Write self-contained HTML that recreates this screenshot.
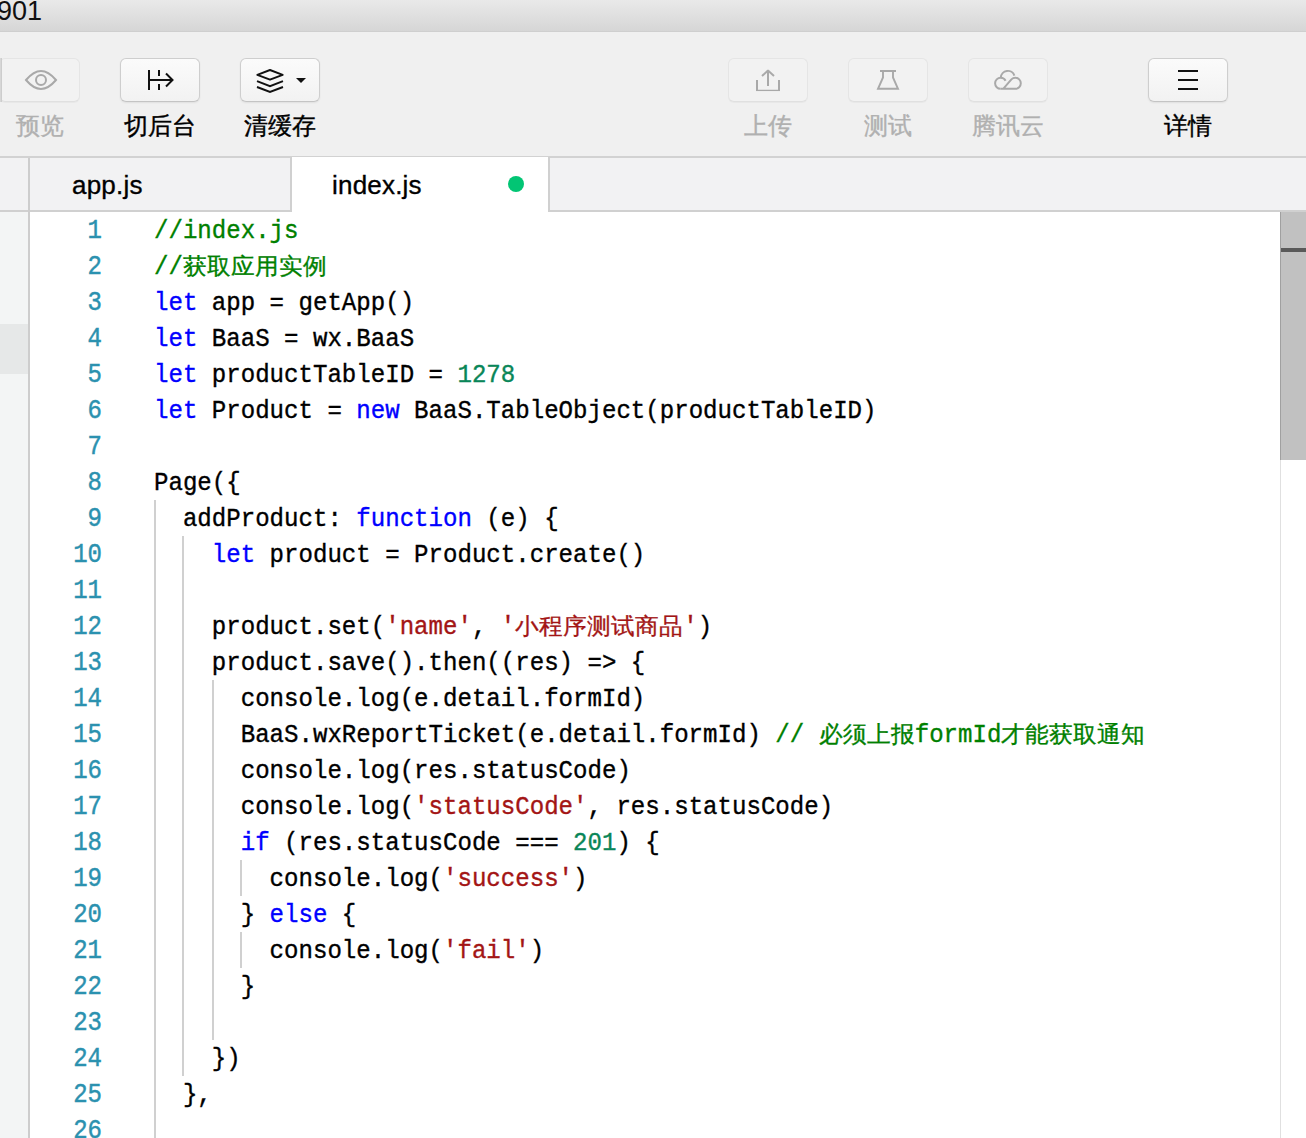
<!DOCTYPE html>
<html><head><meta charset="utf-8">
<style>
*{margin:0;padding:0;box-sizing:border-box}
html,body{width:1306px;height:1138px;overflow:hidden;background:#fff;font-family:"Liberation Sans",sans-serif}
.abs{position:absolute}
#title{left:0;top:0;width:1306px;height:32px;background:linear-gradient(#e9e9e9,#d6d6d6);border-bottom:1px solid #cfcfcf;overflow:hidden}
#title span{position:absolute;left:-3px;top:-4px;font-size:27px;color:#111;white-space:nowrap}
#toolbar{left:0;top:32px;width:1306px;height:124px;background:#f0f0f0}
#tbline{left:0;top:156px;width:1306px;height:2px;background:#d2d2d2}
.btn{position:absolute;top:58px;width:80px;height:44px;border-radius:6px;background:linear-gradient(#fbfbfb,#f2f2f2);border:1px solid #cecece;border-bottom-color:#c4c4c4;box-shadow:0 1px 2px rgba(0,0,0,0.07)}
.btn.dis{background:#f2f2f2;border:1px solid #e5e5e5;border-bottom-color:#e0e0e0;box-shadow:0 1px 1px rgba(0,0,0,0.035)}
.lbl{position:absolute;top:109px;width:120px;text-align:center;font-size:24px;line-height:34px;color:#000;-webkit-text-stroke:0.4px currentColor}
.lbl.dis{color:#b0b0b0}
#tabbar{left:0;top:158px;width:1306px;height:52px;background:#f2f2f3}
#tabline{left:0;top:210px;width:1306px;height:2px;background:#d0d0d0}
#side{left:0;top:212px;width:28px;height:926px;background:#f3f5f5}
#sideband{left:0;top:324px;width:28px;height:50px;background:#e6e8e8}
#vline{left:28px;top:158px;width:2px;height:980px;background:#cdcdcd}
.tab{position:absolute;font-size:26px;color:#000;top:168px;line-height:34px;letter-spacing:0.2px;-webkit-text-stroke:0.35px currentColor}
#acttab{left:290px;top:157px;width:260px;height:55px;background:#fff;border-left:2px solid #d0d0d0;border-right:2px solid #d0d0d0}
#dot{left:508px;top:176px;width:16px;height:16px;border-radius:50%;background:#02c574}
#editor{left:30px;top:212px;width:1250px;height:926px;background:#fff}
.ln{position:absolute;left:30px;width:72px;text-align:right;font-family:"Liberation Mono",monospace;font-size:24px;line-height:36px;color:#2b91af;transform:scaleY(1.15);-webkit-text-stroke:0.4px currentColor;transform-origin:0 24px}
.cl{position:absolute;left:154px;transform:scaleY(1.1);transform-origin:0 24px;font-family:"Liberation Mono",monospace;font-size:24.08px;line-height:36px;color:#000;white-space:pre;-webkit-text-stroke:0.35px currentColor}
.z{display:inline-block;transform:scaleY(0.885);transform-origin:0 24px}
.k{color:#0000ff}.c{color:#008000}.s{color:#a31515}.n{color:#098658}
.g{position:absolute;width:2px;background:#d0d0d0}
#sbtrack{left:1280px;top:212px;width:26px;height:926px;background:#fff;border-left:1px solid #e0e0e0}
#sbthumb{left:1280px;top:212px;width:26px;height:248px;background:#c1c1c1;border-left:1px solid #a0a0a0}
#sbmark{left:1281px;top:248px;width:25px;height:4px;background:#595959}
</style></head><body>
<div id="title" class="abs"><span>901</span></div>
<div id="toolbar" class="abs"></div>
<div id="tbline" class="abs"></div>

<!-- toolbar buttons -->
<div class="btn dis" style="left:-1px;width:81px"></div>
<div class="abs" style="left:0;top:58px;width:2px;height:44px;background:linear-gradient(90deg,#dcdcdc,#c8c8c8)"></div>
<div class="lbl dis" style="left:-20px">预览</div>
<div class="btn" style="left:120px"></div>
<div class="lbl" style="left:100px">切后台</div>
<div class="btn" style="left:240px"></div>
<div class="lbl" style="left:220px">清缓存</div>
<div class="btn dis" style="left:728px"></div>
<div class="lbl dis" style="left:708px">上传</div>
<div class="btn dis" style="left:848px"></div>
<div class="lbl dis" style="left:828px">测试</div>
<div class="btn dis" style="left:968px"></div>
<div class="lbl dis" style="left:948px">腾讯云</div>
<div class="btn" style="left:1148px"></div>
<div class="lbl" style="left:1128px">详情</div>

<svg class="abs" style="left:0;top:0" width="1306" height="160" viewBox="0 0 1306 160">
<g fill="none" stroke="#a9a9a9" stroke-width="2">
<path d="M26,80 C32,73 36,71 41,71 C46,71 50,73 56,80 C50,87 46,89 41,89 C36,89 32,87 26,80 Z"/>
<circle cx="41" cy="80" r="5"/>
<path d="M757,80 V91 M779,80 V91"/><path d="M756,90.4 H780" stroke-width="1.3"/>
<path d="M768,71 V86"/><path d="M762,76 L768,70.6 L774,76" stroke-linejoin="bevel"/>
<path d="M880,71 H896 M883,71 V77.5 L878,88.8 H898 L893,77.5 V71" stroke-width="1.9"/>
<path d="M1000.8,77.4 A7,7 0 0 1 1014.4,75.6"/>
<path d="M1000.6,88.8 H1015.3 A5.5,5.5 0 0 0 1015.3,77.8 A5.5,5.5 0 0 0 1011.4,79.4 L1003.2,88.8"/>
<path d="M1000.6,88.8 A5.5,5.5 0 0 1 1000.6,77.8 A5.5,5.5 0 0 1 1005.6,80.8"/>
</g>
<g fill="none" stroke="#111" stroke-width="2">
<path d="M149,70 V90 M149,80 H172"/>
<path d="M159,70 V76 M159,84 V90"/>
<path d="M166,73.5 L172.5,80 L166,86.5"/>
<path d="M257.3,74.8 L270,70 L282.7,74.8 L270,79.6 Z" stroke-width="1.9" stroke-linejoin="round"/>
<path d="M257,81.2 L270,86.2 L283,81.2" stroke-width="1.9"/>
<path d="M257,87 L270,92 L283,87" stroke-width="1.9"/>
<path d="M1178,71 H1198 M1178,80 H1198 M1178,89 H1198"/>
</g>
<path d="M296,78 H306 L301,83 Z" fill="#111"/>
</svg>
<div id="tabbar" class="abs"></div>
<div id="acttab" class="abs"></div>
<div id="tabline" class="abs"></div>
<div class="tab" style="left:72px">app.js</div>
<div class="tab" style="left:332px">index.js</div>
<div id="dot" class="abs"></div>

<div id="editor" class="abs"></div>
<div id="side" class="abs"></div>
<div id="sideband" class="abs"></div>
<div id="vline" class="abs"></div>
<div id="acttabfix" class="abs" style="left:292px;top:208px;width:256px;height:4px;background:#fff"></div>

<!--CODE--><div id="code">
<div class="ln" style="top:214px">1</div>
<div class="cl" style="top:214px"><span class="c">//index.js</span></div>
<div class="ln" style="top:250px">2</div>
<div class="cl" style="top:250px"><span class="c">//<span class="z">获取应用实例</span></span></div>
<div class="ln" style="top:286px">3</div>
<div class="cl" style="top:286px"><span class="k">let</span> app = getApp()</div>
<div class="ln" style="top:322px">4</div>
<div class="cl" style="top:322px"><span class="k">let</span> BaaS = wx.BaaS</div>
<div class="ln" style="top:358px">5</div>
<div class="cl" style="top:358px"><span class="k">let</span> productTableID = <span class="n">1278</span></div>
<div class="ln" style="top:394px">6</div>
<div class="cl" style="top:394px"><span class="k">let</span> Product = <span class="k">new</span> BaaS.TableObject(productTableID)</div>
<div class="ln" style="top:430px">7</div>
<div class="ln" style="top:466px">8</div>
<div class="cl" style="top:466px">Page({</div>
<div class="ln" style="top:502px">9</div>
<div class="cl" style="top:502px">  addProduct: <span class="k">function</span> (e) {</div>
<div class="ln" style="top:538px">10</div>
<div class="cl" style="top:538px">    <span class="k">let</span> product = Product.create()</div>
<div class="ln" style="top:574px">11</div>
<div class="ln" style="top:610px">12</div>
<div class="cl" style="top:610px">    product.set(<span class="s">'name'</span>, <span class="s">'<span class="z">小程序测试商品</span>'</span>)</div>
<div class="ln" style="top:646px">13</div>
<div class="cl" style="top:646px">    product.save().then((res) =&gt; {</div>
<div class="ln" style="top:682px">14</div>
<div class="cl" style="top:682px">      console.log(e.detail.formId)</div>
<div class="ln" style="top:718px">15</div>
<div class="cl" style="top:718px">      BaaS.wxReportTicket(e.detail.formId) <span class="c">// <span class="z">必须上报</span>formId<span class="z">才能获取通知</span></span></div>
<div class="ln" style="top:754px">16</div>
<div class="cl" style="top:754px">      console.log(res.statusCode)</div>
<div class="ln" style="top:790px">17</div>
<div class="cl" style="top:790px">      console.log(<span class="s">'statusCode'</span>, res.statusCode)</div>
<div class="ln" style="top:826px">18</div>
<div class="cl" style="top:826px">      <span class="k">if</span> (res.statusCode === <span class="n">201</span>) {</div>
<div class="ln" style="top:862px">19</div>
<div class="cl" style="top:862px">        console.log(<span class="s">'success'</span>)</div>
<div class="ln" style="top:898px">20</div>
<div class="cl" style="top:898px">      } <span class="k">else</span> {</div>
<div class="ln" style="top:934px">21</div>
<div class="cl" style="top:934px">        console.log(<span class="s">'fail'</span>)</div>
<div class="ln" style="top:970px">22</div>
<div class="cl" style="top:970px">      }</div>
<div class="ln" style="top:1006px">23</div>
<div class="ln" style="top:1042px">24</div>
<div class="cl" style="top:1042px">    })</div>
<div class="ln" style="top:1078px">25</div>
<div class="cl" style="top:1078px">  },</div>
<div class="ln" style="top:1114px">26</div>
<div class="g" style="left:154px;top:500px;height:648px"></div>
<div class="g" style="left:182px;top:536px;height:540px"></div>
<div class="g" style="left:212px;top:680px;height:360px"></div>
<div class="g" style="left:240px;top:860px;height:36px"></div>
<div class="g" style="left:240px;top:932px;height:36px"></div>
</div><!--/CODE-->

<div id="sbtrack" class="abs"></div>
<div id="sbthumb" class="abs"></div>
<div id="sbmark" class="abs"></div>
</body></html>
